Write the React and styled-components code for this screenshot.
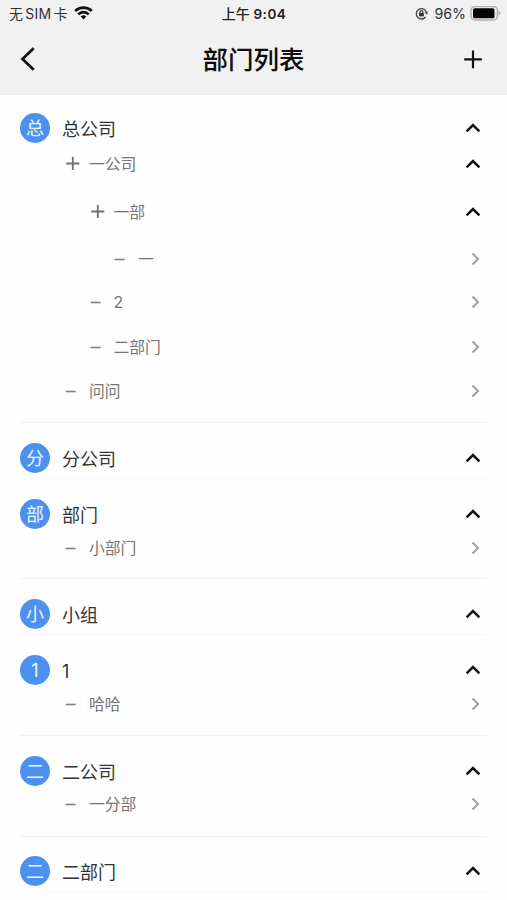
import React from 'react';
import styled, { createGlobalStyle } from 'styled-components';

const GlobalStyle = createGlobalStyle`
  * { box-sizing: border-box; }
  body {
    margin: 0;
    background: #fefefe;
    font-family: Inter, "Noto Sans CJK SC", sans-serif;
  }
`;

const Page = styled.main`
  width: 507px;
  height: 900px;
  overflow: hidden;
  background: #fefefe;
`;

const Top = styled.header`
  height: 95px;
  background: #f1f1f1;
  border-bottom: 1px solid #e9e9e9;
`;

const StatusBar = styled.div`
  display: grid;
  grid-template-columns: 1fr auto 1fr;
  align-items: center;
  height: 27px;
  padding: 0 6px 0 9px;
  font: 400 14px/20px Inter, "Noto Sans CJK SC", sans-serif;
  color: #333;
`;

const StatusGroup = styled.div`
  display: flex;
  align-items: center;
  justify-content: ${(p) => (p.$end ? 'flex-end' : 'flex-start')};
`;

const Carrier = styled.span`
  margin-right: 6px;
  letter-spacing: 0.2px;
  word-spacing: -2px;
`;

const Clock = styled.span`
  color: #222;
  font-size: ${(p) => (p.$digits ? 13.5 : 14)}px;
  font-weight: ${(p) => (p.$digits ? 600 : 500)};
  letter-spacing: ${(p) => (p.$digits ? 0.5 : 0)}px;
`;

const ClockGroup = styled(StatusGroup)`
  margin-right: 2px;
`;

const Percent = styled.span`
  margin: 0 4px 0 6px;
  font-size: 14.2px;
`;

const NavBar = styled.div`
  display: grid;
  grid-template-columns: 60px 1fr 60px;
  align-items: center;
  height: 64px;
`;

const NavButton = styled.button`
  display: flex;
  justify-content: ${(p) => (p.$end ? 'flex-end' : 'flex-start')};
  padding: 0 ${(p) => (p.$end ? 24 : 0)}px 0 ${(p) => (p.$end ? 0 : 20)}px;
  border: 0;
  background: none;
`;

const Title = styled.h1`
  margin: 0;
  padding-top: 2px;
  font-size: 25.5px;
  line-height: 36px;
  font-weight: 500;
  text-align: center;
  color: #0c0c0c;
`;

const Section = styled.section`
  margin: 0 20px;
  padding: ${(p) => p.$top}px 0 ${(p) => p.$bottom}px;
  border-bottom: 1px solid ${(p) => (p.$faint ? '#f7f7f7' : '#f3f3f3')};
`;

const Head = styled.div`
  display: flex;
  align-items: center;
  height: 30px;
  padding-right: 6px;
`;

const Avatar = styled.span`
  flex: none;
  width: 30px;
  height: 30px;
  margin-right: 12px;
  border-radius: 50%;
  background: #4c90f0;
  color: #eef6ff;
  font-size: 18px;
  line-height: 32px;
  text-align: center;
`;

const HeadName = styled.span`
  flex: 1;
  padding-top: 3px;
  font-size: 18px;
  line-height: 30px;
  color: #333;
`;

const Row = styled.div`
  display: flex;
  align-items: center;
  height: 24px;
  margin-top: ${(p) => p.$gap}px;
  padding: 0 6px 0 ${(p) => 20.5 + p.$level * 24.5}px;
`;

const Marker = styled.span`
  display: flex;
  width: 24px;
`;

const RowName = styled.span`
  flex: 1;
  padding-top: 2px;
  font-size: 15.8px;
  line-height: 24px;
  color: #757575;
`;

const Icon = styled.svg`
  display: block;
  flex: none;
  fill: none;
  stroke: ${(p) => p.$color || '#111'};
  stroke-width: ${(p) => p.$weight || 2.5};
`;

const ChevronUp = () => (
  <Icon width="16" height="12" viewBox="0 0 16 12">
    <path d="M1.6 9.3 8 3l6.4 6.3" />
  </Icon>
);

const ChevronRight = () => (
  <Icon width="10" height="14" viewBox="0 0 10 14" $color="#a0a0a0" $weight={2}>
    <path d="M1.5 1.5 7 7l-5.5 5.5" />
  </Icon>
);

const PlusMark = () => (
  <Icon width="16" height="16" viewBox="0 0 16 16" $color="#707070" $weight={1.8}>
    <path d="M1.3 7.5h13M7.8 1v13" />
  </Icon>
);

const MinusMark = () => (
  <Icon width="16" height="16" viewBox="0 0 16 16" $color="#808080" $weight={1.6}>
    <path d="M.6 8.5h10" />
  </Icon>
);

const BackIcon = () => (
  <Icon width="16" height="26" viewBox="0 0 16 26" $weight={2.8}>
    <path d="M13.7 2.2 2.5 13l11.2 10.8" />
  </Icon>
);

const AddIcon = () => (
  <Icon width="20" height="20" viewBox="0 0 20 20" $weight={2.2}>
    <path d="M1.2 10.4h17.6M10 1.6v17.6" />
  </Icon>
);

const WifiIcon = () => (
  <Icon width="19" height="16" viewBox="0 0 19 16" $weight={2.6}>
    <path d="M1.2 5a12 12 0 0 1 16.6 0M4.2 8.3a7.5 7.5 0 0 1 10.6 0" />
    <path d="M6.7 10.6a4 4 0 0 1 5.6 0l-2.8 2.9z" fill="#111" stroke="none" />
  </Icon>
);

const RotationLockIcon = () => (
  <Icon width="13" height="13" viewBox="0 0 13 13" $color="#444" $weight={1.3}>
    <path d="M11.2 4.6A5.2 5.2 0 1 0 10.6 10" />
    <path d="m9.4 5.3 3.4-.8-.6 3.3z" fill="#444" stroke="none" />
    <path d="M5 6.2V5a1.4 1.4 0 0 1 2.8 0v1.2" />
    <path d="M4 6h4.8v3.4H4z" fill="#333" stroke="none" />
  </Icon>
);

const BatteryIcon = () => (
  <Icon width="31" height="16" viewBox="0 0 31 16" $color="#b0b0b0" $weight={1.5}>
    <rect x="1" y=".5" width="26.5" height="13.5" rx="4" />
    <rect x="3" y="2.3" width="21.5" height="10" rx="1.6" fill="#050505" stroke="none" />
    <path d="M28.8 5c2 .8 2 3.6 0 4.4z" fill="#aaa" stroke="none" />
  </Icon>
);

const departments = [
  {
    badge: '总', name: '总公司', top: 18, bottom: 19,
    rows: [
      { name: '一公司', level: 1, gap: 9, open: true },
      { name: '一部', level: 2, gap: 24, open: true },
      { name: '一', level: 3, gap: 23 },
      { name: '2', level: 2, gap: 19 },
      { name: '二部门', level: 2, gap: 21 },
      { name: '问问', level: 1, gap: 20 },
    ],
  },
  { badge: '分', name: '分公司' },
  { badge: '部', name: '部门', rows: [{ name: '小部门', level: 1, gap: 7 }] },
  { badge: '小', name: '小组' },
  { badge: '1', name: '1', bottom: 19, rows: [{ name: '哈哈', level: 1, gap: 7 }] },
  { badge: '二', name: '二公司', bottom: 20, rows: [{ name: '一分部', level: 1, gap: 6 }] },
  { badge: '二', name: '二部门', top: 19, bottom: 6 },
];

function Department({ badge, name, top = 20, bottom, rows = [] }) {
  const leaf = rows.length === 0;
  return (
    <Section $top={top} $bottom={bottom ?? (leaf ? 5 : 18)} $faint={leaf}>
      <Head>
        <Avatar>{badge}</Avatar>
        <HeadName>{name}</HeadName>
        <ChevronUp />
      </Head>
      {rows.map((row) => (
        <Row key={row.name} $level={row.level} $gap={row.gap}>
          <Marker>{row.open ? <PlusMark /> : <MinusMark />}</Marker>
          <RowName>{row.name}</RowName>
          {row.open ? <ChevronUp /> : <ChevronRight />}
        </Row>
      ))}
    </Section>
  );
}

export default function App() {
  return (
    <Page>
      <GlobalStyle />
      <Top>
        <StatusBar>
          <StatusGroup>
            <Carrier>无 SIM 卡</Carrier>
            <WifiIcon />
          </StatusGroup>
          <ClockGroup>
            <Clock>上午&nbsp;</Clock>
            <Clock $digits>9:04</Clock>
          </ClockGroup>
          <StatusGroup $end>
            <RotationLockIcon />
            <Percent>96%</Percent>
            <BatteryIcon />
          </StatusGroup>
        </StatusBar>
        <NavBar>
          <NavButton aria-label="返回"><BackIcon /></NavButton>
          <Title>部门列表</Title>
          <NavButton $end aria-label="添加"><AddIcon /></NavButton>
        </NavBar>
      </Top>
      {departments.map((d, i) => (
        <Department key={i} {...d} />
      ))}
    </Page>
  );
}
